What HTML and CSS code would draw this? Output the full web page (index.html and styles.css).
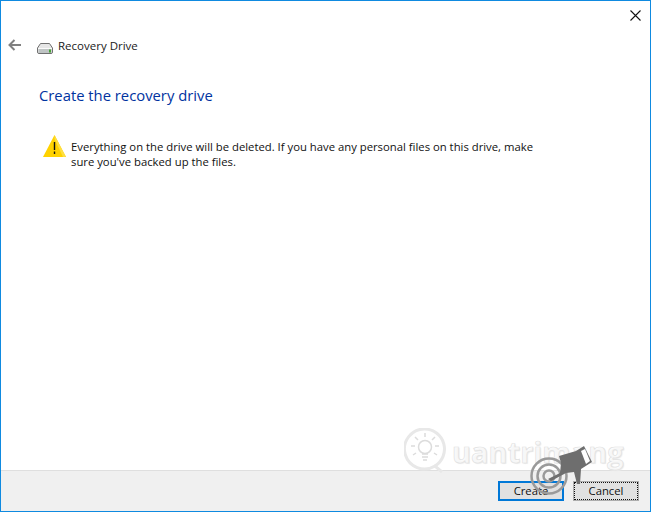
FILE: index.html
```html
<!DOCTYPE html>
<html lang="en">
<head>
<meta charset="utf-8">
<title>Recovery Drive</title>
<link rel="stylesheet" href="styles.css">
</head>
<body>
<div class="window">
  <div class="titlebar">
    <svg class="close" width="11" height="11" viewBox="0 0 11 11"><path d="M.5.5l10 10M10.5.5l-10 10" stroke="#111" stroke-width="1.1" fill="none"/></svg>
  </div>
  <div class="nav">
    <svg class="back" width="13" height="12" viewBox="0 0 13 12"><path d="M13 6H2M6.500 1L1.500 6l5 5" stroke="#808080" stroke-width="2" fill="none"/></svg>
    <svg class="drive" width="16" height="11" viewBox="0 0 16 11"><path d="M3.500.5h9l3 4.500v4a1.500 1.500 0 0 1-1.500 1.500H2A1.500 1.500 0 0 1 .5 9V5z" fill="#e6e6e6" stroke="#707070"/><rect x="1.500" y="5.500" width="13" height="4.500" fill="#bfc4c4"/><path d="M1 5.500h14" stroke="#fafafa"/><rect x="12" y="6.500" width="2" height="3" fill="#45a535"/></svg>
    <span class="nav-title">Recovery Drive</span>
  </div>
  <main class="content">
    <h1 class="heading">Create the recovery drive</h1>
    <div class="warning">
      <svg class="warn-icon" width="23" height="22" viewBox="0 0 23 22"><path d="M11.500 0L23 22H0z" fill="#ffd200"/><path d="M11.500 0L23 22H20L11.500 4z" fill="#ffdf40"/><path d="M11.500 7v8M11.500 16.500v2.500" stroke="#111" stroke-width="1.400"/></svg>
      <p class="warn-text">Everything on the drive will be deleted. If you have any personal files on this drive, make sure you've backed up the files.</p>
    </div>
  </main>
  <footer class="footer">
    <button class="btn btn-default">Create</button>
    <button class="btn btn-focus">Cancel</button>
  </footer>
  <div class="watermark">
    <svg class="bulb" width="42" height="46" viewBox="0 0 42 46" fill="none" stroke="#e8e8e8" stroke-width="1.500"><path d="M21 1a20 20 0 1 0 10 37l7 6" stroke-width="3"/><path d="M31 38a20 20 0 0 0-10-37" stroke-width="3"/><circle cx="21" cy="19" r="6.500" stroke="#dcdcdc"/><path d="M18 26h6M18 29h6M19 32h4M21 5v4M11 9l3 3M31 9l-3 3M7 18h4M31 18h4M9 27l3-2M33 27l-3-2" stroke="#dcdcdc"/></svg>
    <span class="wm-text">uantrimang</span>
  </div>
  <svg class="cursor" width="80" height="60" viewBox="0 0 80 60">
    <g fill="none" stroke="#9a9a9a"><circle cx="21" cy="34" r="17.500" stroke-width="2.500"/><circle cx="21" cy="34" r="11.500" stroke-width="2.500"/><circle cx="21" cy="34" r="5.500" stroke-width="2.500"/></g>
    <path d="M20 37L32 31 33 21 31 14 48 9 56 4 64 20 53 27 52 42 49 42 46 30 38 31 23 39z" fill="#6e6e6e"/>
    <path d="M53 9l4-2 5 12-4 3z" fill="#fff"/>
  </svg>
</div>
</body>
</html>
```
FILE: styles.css
```css
* { box-sizing: border-box; }
html, body { margin: 0; padding: 0; }
body { width: 651px; height: 512px; overflow: hidden; background: #fff; font-family: "Open Sans", "Noto Sans", sans-serif; }
.window { position: relative; width: 651px; height: 512px; border: 1px solid #0f8ae0; display: flex; flex-direction: column; background: #fff; overflow: hidden; }
.titlebar { height: 28px; display: flex; justify-content: flex-end; align-items: flex-start; padding: 9px 9px 0 0; }
.nav { height: 32px; display: flex; align-items: center; padding-left: 7px; }
.back { margin-right: 16px; }
.drive { margin-right: 5px; margin-top: 7px; }
.nav-title { font-size: 11.5px; color: #1a1a1a; }
.content { flex: 1; padding: 0 0 0 38px; }
.heading { margin: 24px 0 0; font-size: 14.8px; font-weight: 400; color: #00339f; line-height: 20px; }
.warning { display: flex; margin: 30px 0 0 4px; }
.warn-icon { margin-right: 5px; flex: none; }
.warn-text { margin: 4px 0 0; width: 470px; font-size: 11.3px; line-height: 15px; color: #111; }
.footer { height: 41px; background: #f0f0f0; border-top: 1px solid #dfdfdf; display: flex; justify-content: flex-end; gap: 9px; padding: 10px 11px 0 0; }
.btn { width: 66px; height: 20px; padding: 0 0 2px; font: 11.3px "Open Sans", "Noto Sans", sans-serif; color: #111; background: #e1e1e1; }
.btn-default { border: 2px solid #0078d7; }
.btn-focus { border: 1px solid #adadad; outline: 1px dotted #111; outline-offset: -2px; }
.watermark { position: absolute; left: 403px; top: 427px; display: flex; align-items: center; }
.wm-text { margin-left: 6px; font: 700 29px "Open Sans", sans-serif; color: rgba(255, 255, 255, .6); -webkit-text-stroke: .7px #e0e0e0; text-shadow: 1px 1px 1px #ececec; }
.cursor { position: absolute; left: 527px; top: 441px; }
```
